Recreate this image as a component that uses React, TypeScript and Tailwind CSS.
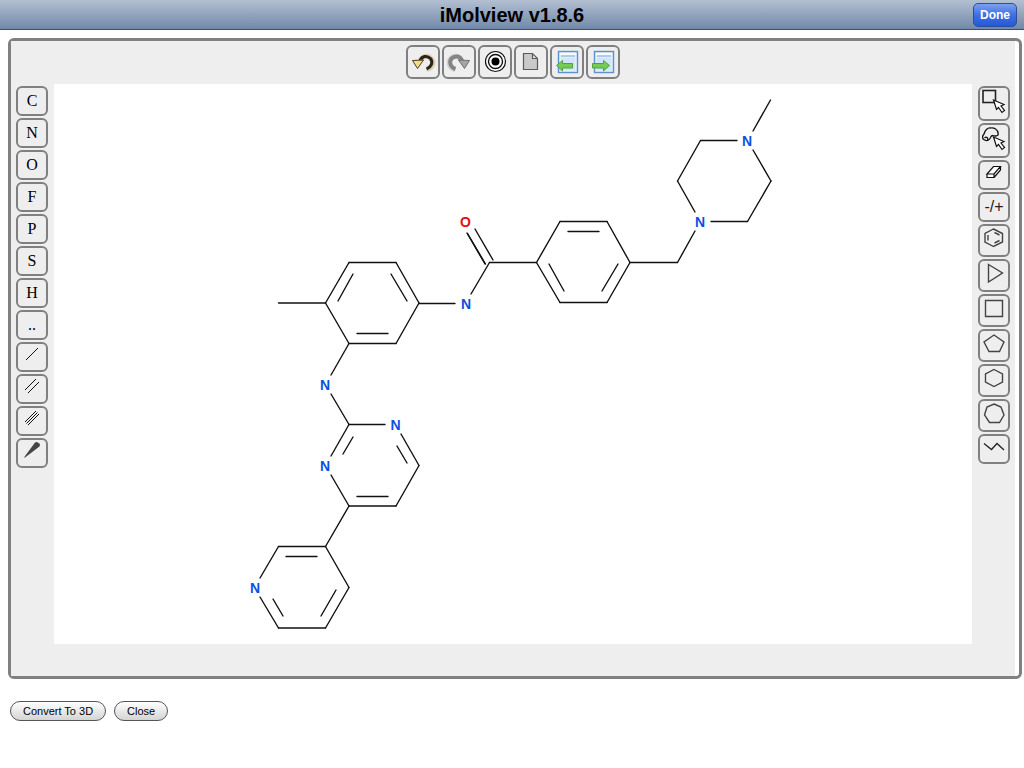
import React from 'react';

type Point = [number, number];
type Bond = [number, number, number, number];

interface Tool {
  name: string;
  height: string;
  icon: React.ReactNode;
}

const ATOM_BUTTONS = ['C', 'N', 'O', 'F', 'P', 'S', 'H', '..'];

const BONDS: Bond[] = [
  // methylpiperazine
  [770.5, 100, 753, 131],
  [737, 140.5, 700.5, 140.5],
  [700.5, 140.5, 677.5, 181],
  [677.5, 181, 695, 212],
  [711, 221.5, 747.5, 221.5],
  [747.5, 221.5, 771, 181],
  [771, 181, 753, 150],
  // linker
  [695, 231, 677.5, 262.5],
  [677.5, 262.5, 630, 262.5],
  // benzamide ring
  [630, 262.5, 607, 221.5],
  [607, 221.5, 560, 221.5],
  [560, 221.5, 536.5, 262.5],
  [536.5, 262.5, 560, 302.5],
  [560, 302.5, 607, 302.5],
  [607, 302.5, 630, 262.5],
  [568, 231.5, 599, 231.5],
  [549, 264, 564, 291],
  [618, 264, 602, 291],
  // amide
  [536.5, 262.5, 489.5, 262.5],
  [489.5, 262.5, 471, 294],
  [475, 229, 493, 260],
  [467, 233, 485, 264],
  [467.5, 233.5, 485.5, 264],
  [455, 303.5, 419, 303.5],
  // toluidine ring
  [419, 303, 396, 262.5],
  [396, 262.5, 349, 262.5],
  [349, 262.5, 325.5, 303],
  [325.5, 303, 349, 343.5],
  [349, 343.5, 396, 343.5],
  [396, 343.5, 419, 303],
  [391, 274, 407, 301],
  [353, 274, 338, 301],
  [357, 333.5, 388, 333.5],
  [325.5, 303, 278.5, 303],
  // amine bridge
  [349, 343.5, 331, 375],
  [331, 394, 349, 424.5],
  // pyrimidine
  [349, 424.5, 385, 424.5],
  [401, 434, 419, 465.5],
  [419, 465.5, 396, 506],
  [396, 506, 349, 506],
  [349, 506, 331, 475],
  [331, 456, 349, 424.5],
  [353, 437, 343, 454],
  [397, 446, 407, 463],
  [357, 496.5, 388, 496.5],
  // pyridine
  [349, 506, 325.5, 546.5],
  [325.5, 546.5, 278.5, 546.5],
  [278.5, 546.5, 260, 578],
  [260, 597, 278.5, 628],
  [278.5, 628, 325.5, 628],
  [325.5, 628, 349, 587.5],
  [349, 587.5, 325.5, 546.5],
  [286, 556.5, 317, 556.5],
  [336, 590, 321, 616],
  [273, 599, 283, 616],
];

const NITROGENS: Point[] = [
  [747, 146],
  [700, 227],
  [466, 309],
  [325, 390],
  [395.5, 430],
  [325, 471],
  [255, 593],
];

const Cursor = () => (
  <path
    d="M15.5 14 L18.5 23.5 L20.5 21.5 L24 26.5 L26.5 24.5 L23 20 L26 18.5 Z"
    fill="#fff"
    stroke="#111"
    strokeWidth="1.2"
  />
);

const shape = (points: string) => <polygon points={points} fill="none" stroke="#444" strokeWidth="1.4" />;

const BOND_TOOLS: Tool[] = [
  { name: 'Single bond', height: 'h-[30px]', icon: <path d="M10 18 L22 6" stroke="#111" /> },
  { name: 'Double bond', height: 'h-[30px]', icon: <path d="M9 16 L20 5 M12 19 L23 8" stroke="#111" /> },
  {
    name: 'Triple bond',
    height: 'h-[30px]',
    icon: <path d="M9 16 L20 5 M10.5 17.5 L21.5 6.5 M12 19 L23 8" stroke="#111" />,
  },
  {
    name: 'Wedge bond',
    height: 'h-[30px]',
    icon: <path d="M8 19.5 L19 4.5 L21 4 L24 6 L23.5 8.5 L9 19.5 Z" fill="#444" />,
  },
];

const SHAPE_TOOLS: Tool[] = [
  {
    name: 'Select rectangle',
    height: 'h-[35px]',
    icon: (
      <>
        <rect x="5" y="4.5" width="12.5" height="12" fill="none" stroke="#222" strokeWidth="1.6" />
        <Cursor />
      </>
    ),
  },
  {
    name: 'Select lasso',
    height: 'h-[35px]',
    icon: (
      <>
        <path
          d="M6.5 17 C4 16 4 13 6 11 C7 7 10 4.5 12.5 5 C16 4 20 7 20 10 C21 13 18 13.5 14.5 12.5 C12 13 13 16 10.5 17 C9 18 7.5 17.5 6.5 17 M6.5 15 C8.5 13 10.5 15 9.5 17.5"
          fill="none"
          stroke="#111"
          strokeWidth="1.3"
        />
        <Cursor />
      </>
    ),
  },
  {
    name: 'Eraser',
    height: 'h-[30px]',
    icon: (
      <path
        d="M15.5 6.5 H22.5 L16 14 H9 Z M9 14 V17.5 H16 V14 M22.5 6.5 V10 L16 17.5"
        fill="#fff"
        stroke="#111"
        strokeWidth="1.2"
      />
    ),
  },
  { name: 'Charge', height: 'h-[30px]', icon: null },
  {
    name: 'Benzene',
    height: 'h-[33px]',
    icon: (
      <>
        {shape('15.5,5 24.5,9.5 24.5,18 15.5,22.5 7,18 7,9.5')}
        <path d="M16.5 8.5 L21.5 11 M10 11 V16.5 M16.5 19 L21.5 16.5" stroke="#444" strokeWidth="1.4" />
      </>
    ),
  },
  { name: 'Cyclopropane', height: 'h-[33px]', icon: shape('10.5,5.5 24.5,14 10.5,23') },
  { name: 'Cyclobutane', height: 'h-[33px]', icon: shape('7.5,6.5 24.5,6.5 24.5,22.5 7.5,22.5') },
  { name: 'Cyclopentane', height: 'h-[33px]', icon: shape('16,6 26,13 21.5,22.5 11,22.5 6,13') },
  { name: 'Cyclohexane', height: 'h-[33px]', icon: shape('16,5.5 24.5,10 24.5,18 16,22.5 7.5,18 7.5,10') },
  { name: 'Cycloheptane', height: 'h-[33px]', icon: shape('16,5 23,8 26,16 21.5,23.5 11.5,23.5 6.5,16 9,8') },
  {
    name: 'Chain',
    height: 'h-[30px]',
    icon: <path d="M6 9.5 L13.5 15.5 L19 9.5 L26 16" fill="none" stroke="#222" strokeWidth="1.3" />,
  },
];

const PageFrame = () => (
  <>
    <rect x="8.5" y="6.5" width="19" height="21" fill="#e3eefb" stroke="#5c93cf" strokeWidth="1.4" />
    <rect x="10" y="8" width="16" height="2.5" fill="#f8fbff" />
    <path d="M11 11 H25" stroke="#76a5da" />
    <rect x="11" y="13" width="14" height="12" fill="#d2e4f8" />
  </>
);

const FILE_TOOLS: Tool[] = [
  {
    name: 'Undo',
    height: 'h-[34px]',
    icon: (
      <>
        <path d="M14 16 C16 10.5 22 10 25.5 14 C28.5 18 26 23 21 24.5" fill="none" stroke="#d8cfae" strokeWidth="5" />
        <path d="M14 16 C15.5 11 21 10 24.5 13.5 C27.5 17.5 25 22.5 20.5 24" fill="none" stroke="#2a241c" strokeWidth="3" />
        <path d="M6.5 15.5 L17.5 15 L11.5 23.5 Z" fill="#f4dc8c" stroke="#4a3d22" />
      </>
    ),
  },
  {
    name: 'Redo',
    height: 'h-[34px]',
    icon: (
      <>
        <path d="M20 16 C18 10.5 12 10 8.5 14 C5.5 18 8 23 13 24.5" fill="none" stroke="#d0d0d0" strokeWidth="5" />
        <path d="M20 16 C18.5 11 13 10 9.5 13.5 C6.5 17.5 9 22.5 13.5 24" fill="none" stroke="#858585" strokeWidth="4" />
        <path d="M27.5 15.5 L16.5 15 L22.5 23.5 Z" fill="#a5a5a5" stroke="#6e6e6e" />
      </>
    ),
  },
  {
    name: 'Center',
    height: 'h-[34px]',
    icon: (
      <>
        <circle cx="17.5" cy="16.5" r="10" fill="#fff" stroke="#111" strokeWidth="1.2" />
        <circle cx="17.5" cy="16.5" r="7" fill="none" stroke="#111" strokeWidth="1.4" />
        <circle cx="17.5" cy="16.5" r="4" fill="#000" />
      </>
    ),
  },
  {
    name: 'New',
    height: 'h-[34px]',
    icon: (
      <path
        d="M9.5 8.5 H18.5 L23.5 13.5 V24.5 H9.5 Z M18.5 8.5 V13.5 H23.5"
        fill="#c9c9c9"
        stroke="#5a5a5a"
        strokeWidth="1.2"
      />
    ),
  },
  {
    name: 'Import',
    height: 'h-[34px]',
    icon: (
      <>
        <PageFrame />
        <path d="M6.5 20.5 L12.5 15.5 V18.5 H22.5 V23 H12.5 V26 Z" fill="#74cc55" stroke="#4fa33a" />
      </>
    ),
  },
  {
    name: 'Export',
    height: 'h-[34px]',
    icon: (
      <>
        <PageFrame />
        <path d="M23.5 20.5 L17.5 15.5 V18.5 H6.5 V23 H17.5 V26 Z" fill="#74cc55" stroke="#4fa33a" />
      </>
    ),
  },
];

const SideButton: React.FC<{ tool: Tool }> = ({ tool }) => (
  <button
    aria-label={tool.name}
    className={`flex w-8 items-start justify-center overflow-hidden rounded-md border-2 border-[#808080] bg-[#eee] ${tool.height}`}
  >
    {tool.icon ? (
      <svg viewBox="2 2 28 28" className="size-7 shrink-0">
        {tool.icon}
      </svg>
    ) : (
      <span className="self-center text-base leading-4 text-[#222]">-/+</span>
    )}
  </button>
);

const Molecule = () => (
  <svg viewBox="54 84 918 560" className="block w-full" role="img" aria-label="Molecule">
    {BONDS.map(([x1, y1, x2, y2], i) => (
      <line key={i} x1={x1} y1={y1} x2={x2} y2={y2} stroke="#111" strokeWidth="1.4" strokeLinecap="round" />
    ))}
    <g fontSize="14" fontWeight="bold" textAnchor="middle">
      {NITROGENS.map(([x, y]) => (
        <text key={`${x}-${y}`} x={x} y={y} fill="#0b50e0">
          N
        </text>
      ))}
      <text x="465.5" y="227" fill="#e01010">
        O
      </text>
    </g>
  </svg>
);

export default function App() {
  return (
    <div className="min-h-screen bg-white font-['Liberation_Sans',Arial,sans-serif] text-black">
      <header className="grid h-[30px] grid-cols-[1fr_auto_1fr] items-center border-b border-[#3f4f68] bg-linear-to-b from-[#b3c0d2] to-[#7189a8] px-[7px]">
        <h1 className="col-start-2 text-xl leading-6 font-bold">iMolview v1.8.6</h1>
        <button className="h-6 w-11 justify-self-end rounded-[5px] border border-[#2c4d9c] bg-linear-to-b from-[#7d9ff0] via-[#3f6fe0] to-[#2459d8] text-xs font-bold text-white">
          Done
        </button>
      </header>

      <main className="mt-2 mr-0.5 ml-2">
        <section className="rounded-md border-3 border-[#808080] pr-1">
          <div className="bg-[#eee] pb-8">
            <div className="flex h-[43px] items-start justify-center gap-0.5 pt-1">
              {FILE_TOOLS.map((tool) => (
                <button
                  key={tool.name}
                  aria-label={tool.name}
                  className={`w-[34px] rounded-md border-2 border-[#808080] bg-[#eee] ${tool.height}`}
                >
                  <svg viewBox="2 2 30 30" className="size-[30px]">
                    {tool.icon}
                  </svg>
                </button>
              ))}
            </div>
            <div className="grid grid-cols-[43px_minmax(0,1fr)_43px]">
              <div className="flex flex-col gap-0.5 pt-0.5 pl-[5px]">
                {ATOM_BUTTONS.map((atom) => (
                  <button
                    key={atom}
                    className="h-[30px] w-8 rounded-md border-2 border-[#808080] bg-[#eee] font-['Liberation_Serif',serif] text-base leading-4"
                  >
                    {atom}
                  </button>
                ))}
                {BOND_TOOLS.map((tool) => (
                  <SideButton key={tool.name} tool={tool} />
                ))}
              </div>
              <div className="bg-white">
                <Molecule />
              </div>
              <div className="flex flex-col gap-0.5 pt-0.5 pl-1.5">
                {SHAPE_TOOLS.map((tool) => (
                  <SideButton key={tool.name} tool={tool} />
                ))}
              </div>
            </div>
          </div>
        </section>

        <div className="mt-[22px] ml-0.5 flex gap-2">
          <button className="h-5 rounded-full border border-[#555] bg-linear-to-b from-white to-[#d4d4d4] px-3 text-[11px] leading-4">
            Convert To 3D
          </button>
          <button className="h-5 rounded-full border border-[#555] bg-linear-to-b from-white to-[#d4d4d4] px-3 text-[11px] leading-4">
            Close
          </button>
        </div>
      </main>
    </div>
  );
}
